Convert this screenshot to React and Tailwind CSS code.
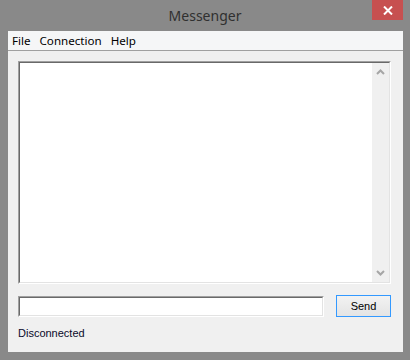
import React from 'react';

function ChevronUp() {
  return (
    <svg width="9" height="6" viewBox="0 0 9 6" className="block">
      <path d="M1 5 L4.5 1.5 L8 5" fill="none" stroke="#a6a6a6" strokeWidth="2" />
    </svg>
  );
}

function ChevronDown() {
  return (
    <svg width="9" height="6" viewBox="0 0 9 6" className="block">
      <path d="M1 1 L4.5 4.5 L8 1" fill="none" stroke="#a6a6a6" strokeWidth="2" />
    </svg>
  );
}

export default function App() {
  return (
    <div
      className="w-[410px] h-[360px] bg-[#898989] flex flex-col text-black"
      style={{ fontFamily: '"Noto Sans", "Open Sans", sans-serif' }}>
      {/* title bar */}
      <div className="relative h-[31px] flex items-center justify-center shrink-0">
        <span className="text-[14px] text-[#303030]">Messenger</span>
        <div className="absolute right-[7px] top-0 w-[31px] h-[20px] bg-[#c75050] flex items-center justify-center">
          <svg width="10" height="9" viewBox="0 0 10 9">
            <path d="M1 0.5 L9 8.5 M9 0.5 L1 8.5" stroke="#ffffff" strokeWidth="2" />
          </svg>
        </div>
      </div>

      {/* client area */}
      <div className="ml-[8px] w-[395px] h-[321px] bg-[#f0f0f0] flex flex-col">
        <div className="h-[20px] bg-[#f5f6f7] border-b border-[#a0a0a0] flex items-center gap-[9px] pl-[4px] text-[11.6px] leading-none">
          <span>File</span>
          <span>Connection</span>
          <span>Help</span>
        </div>

        <div
          className="flex flex-col pl-[10px] pr-[12px] pt-[10px]"
          style={{ fontFamily: '"Liberation Sans", Arial, sans-serif' }}>
          {/* message log */}
          <div className="h-[223px] border border-t-[#a0a0a0] border-l-[#a0a0a0] border-r-white border-b-white">
            <div className="h-full border border-t-[#696969] border-l-[#696969] border-r-[#e3e3e3] border-b-[#e3e3e3] bg-white flex justify-end">
              <div className="w-[17px] h-full bg-[#f0f0f0] flex flex-col justify-between items-center py-[6px]">
                <ChevronUp />
                <ChevronDown />
              </div>
            </div>
          </div>

          {/* input row */}
          <div className="mt-[11px] flex items-center gap-[12px]">
            <div className="w-[306px] h-[21px] border border-t-[#a0a0a0] border-l-[#a0a0a0] border-r-white border-b-white">
              <div className="h-full border border-t-[#696969] border-l-[#696969] border-r-[#e3e3e3] border-b-[#e3e3e3] bg-white" />
            </div>
            <button className="w-[55px] h-[22px] border border-[#3399ff] bg-gradient-to-b from-[#f2f2f2] to-[#e4e4e4] text-[11px] leading-none flex items-center justify-center">
              Send
            </button>
          </div>

          <div className="mt-[11px] text-[11px] leading-none text-[#0a0a2a]">Disconnected</div>
        </div>
      </div>
    </div>
  );
}
